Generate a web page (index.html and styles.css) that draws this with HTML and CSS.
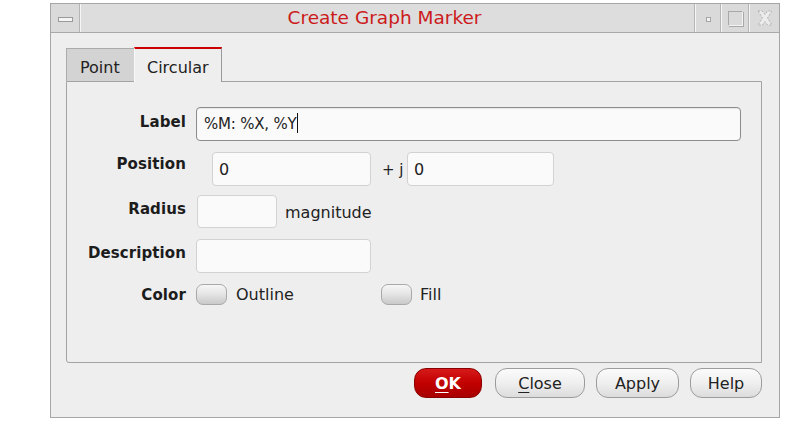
FILE: index.html
```html
<!DOCTYPE html>
<html>
<head>
<meta charset="utf-8">
<link rel="stylesheet" href="styles.css">
</head>
<body>
<div class="window">
  <div class="titlebar">
    <div class="tb-btn tb-menu"><span class="bar-icon"></span></div>
    <div class="title">Create Graph Marker</div>
    <div class="tb-btn tb-min"><span class="dot-icon"></span></div>
    <div class="tb-btn tb-max"><span class="sq-icon"></span></div>
    <div class="tb-btn tb-close">
      <svg width="20" height="20" viewBox="0 0 20 20">
        <path d="M3 3 L7.5 3 L10 6.5 L12.5 3 L17 3 L12.5 10 L17 17 L12.5 17 L10 13.5 L7.5 17 L3 17 L7.5 10 Z" fill="#ececec" stroke="#b0b0b0" stroke-width="1" stroke-dasharray="2 1.5"/>
      </svg>
    </div>
  </div>
  <div class="content">
    <div class="tabs">
      <div class="tab tab-point">Point</div>
      <div class="tab tab-active">Circular</div>
    </div>
    <div class="panel">
      <div class="row row-label">
        <div class="lbl">Label</div>
        <div class="field field-focus field-label">%M: %X, %Y<span class="caret"></span></div>
      </div>
      <div class="row row-pos">
        <div class="lbl">Position</div>
        <div class="field field-pos1">0</div>
        <div class="txt plusj">+ j</div>
        <div class="field field-pos2">0</div>
      </div>
      <div class="row row-rad">
        <div class="lbl">Radius</div>
        <div class="field field-rad"></div>
        <div class="txt mag">magnitude</div>
      </div>
      <div class="row row-desc">
        <div class="lbl">Description</div>
        <div class="field field-desc"></div>
      </div>
      <div class="row row-color">
        <div class="lbl">Color</div>
        <div class="swatch"></div>
        <div class="txt outline">Outline</div>
        <div class="swatch swatch-fill"></div>
        <div class="txt">Fill</div>
      </div>
    </div>
    <div class="footer">
      <div class="btn btn-ok"><u>O</u>K</div>
      <div class="btn btn-close"><u>C</u>lose</div>
      <div class="btn btn-apply">Apply</div>
      <div class="btn btn-help">Help</div>
    </div>
  </div>
</div>
</body>
</html>
```

FILE: styles.css
```css
* { box-sizing: border-box; }
html, body { margin: 0; padding: 0; background: #ffffff; }
body {
  font-family: "DejaVu Sans", "Liberation Sans", sans-serif;
  font-size: 16px;
  color: #222;
  width: 794px;
  height: 422px;
  overflow: hidden;
}
.window {
  margin: 3px 0 0 50px;
  width: 730px;
  height: 415px;
  border: 1px solid #a6a6a6;
  background: #eeeeee;
}
.titlebar {
  height: 29px;
  display: flex;
  background: #dddddd;
  border-bottom: 1px solid #a9a9a9;
}
.tb-btn {
  height: 28px;
  background: #dadada;
  border-right: 1px solid #f6f6f6;
  display: flex;
  align-items: center;
  justify-content: center;
}
.tb-menu { width: 29px; border-right: 1px solid #b5b5b5; }
.bar-icon {
  width: 15px; height: 5px;
  border: 1px solid #9a9a9a;
  background: #f4f4f4;
  margin-top: 3px;
}
.title {
  flex: 1;
  text-align: center;
  color: #cc1a1a;
  font-size: 18.5px;
  line-height: 28px;
  padding-right: 6px;
  border-left: 1px solid #f6f6f6;
  border-right: 1px solid #b5b5b5;
}
.tb-min { width: 26px; border-left: 1px solid #f6f6f6; border-right: 1px solid #b5b5b5; }
.dot-icon {
  width: 5px; height: 5px;
  border: 1px solid #a5a5a5;
  background: #f2f2f2;
  margin-top: 2px;
}
.tb-max { width: 28px; border-left: 1px solid #f6f6f6; border-right: 1px solid #b5b5b5; }
.sq-icon {
  width: 15px; height: 15px;
  border: 1px solid #a8a8a8;
  border-right-color: #f4f4f4;
  border-bottom-color: #f4f4f4;
  background: #dadada;
  box-shadow: 1px 1px 0 #a8a8a8;
}
.tb-close { flex: 0 0 30px; border-left: 1px solid #f6f6f6; border-right: none; }

.content {
  padding: 14px 17px 0 15px;
}
.tabs {
  display: flex;
  align-items: flex-end;
  height: 34px;
}
.tab {
  font-size: 16px;
}
.tab-point {
  width: 68px;
  height: 33px;
  padding-left: 13px;
  background: #d3d3d3;
  border: 1px solid #ababab;
  border-bottom: none;
  border-right: none;
  line-height: 38px;
}
.tab-active {
  position: relative;
  z-index: 1;
  width: 88px;
  height: 35px;
  margin-bottom: -1px;
  padding-left: 12px;
  background: #eeeeee;
  border-top: 2px solid #cc0000;
  border-left: 1px solid #f8f8f8;
  border-right: 1px solid #999999;
  line-height: 38px;
}
.panel {
  width: 696px;
  height: 282px;
  border: 1px solid #a3a3a3;
  border-radius: 0 0 0 3px;
  padding-top: 25px;
  display: flex;
  flex-direction: column;
}
.row {
  display: flex;
  align-items: flex-start;
}
.lbl {
  width: 119px;
  text-align: right;
  font-weight: bold;
  font-size: 15px;
  letter-spacing: 0.1px;
  color: #1c1c1c;
}
.field {
  height: 34px;
  border: 1px solid #d2d2d2;
  border-radius: 4px;
  background: #fafafa;
  padding-left: 6px;
  font-size: 16px;
  line-height: 33px;
  color: #222;
}
.field-focus {
  border-color: #8c8c8c;
  box-shadow: inset 0 1px 1px rgba(0,0,0,0.08);
}
.caret {
  display: inline-block;
  width: 1px;
  height: 20px;
  background: #111;
  vertical-align: -4px;
}
.row-label { height: 34px; }
.row-label .lbl { padding-top: 6px; }
.field-label { margin-left: 10px; width: 545px; font-size: 15px; padding-left: 7px; letter-spacing: -0.2px; }

.row-pos { margin-top: 11px; height: 34px; }
.row-pos .lbl { padding-top: 3px; }
.field-pos1 { margin-left: 26px; width: 159px; }
.txt { font-size: 16px; line-height: 34px; color: #222; }
.plusj { margin-left: 11px; width: 25px; font-size: 15px; line-height: 36px; }
.field-pos2 { width: 147px; }

.row-rad { margin-top: 9px; height: 33px; }
.row-rad .lbl { padding-top: 5px; }
.field-rad { margin-left: 11px; width: 80px; height: 33px; }
.mag { margin-left: 8px; line-height: 36px; }

.row-desc { margin-top: 11px; height: 34px; }
.row-desc .lbl { padding-top: 5px; }
.field-desc { margin-left: 10px; width: 175px; }

.row-color { margin-top: 10px; height: 22px; align-items: center; }
.row-color .lbl { margin-top: 2px; }
.row-color .txt { line-height: 22px; margin-top: 2px; }
.swatch {
  margin-left: 10px;
  width: 31px;
  height: 21px;
  border: 1px solid #a9a9a9;
  border-radius: 7px;
  background: linear-gradient(#f6f6f6 0%, #e6e6e6 45%, #c9c9c9 100%);
}
.outline { margin-left: 9px; width: 145px; }
.swatch-fill { margin-left: 0; margin-right: 8px; }

.footer {
  display: flex;
  justify-content: flex-end;
  margin-top: 5px;
  gap: 11px;
}
.btn {
  height: 30px;
  border: 1px solid #9c9c9c;
  border-radius: 12px;
  background: linear-gradient(#fbfbfb 0%, #efefef 50%, #dcdcdc 100%);
  text-align: center;
  font-size: 16px;
  line-height: 29px;
  color: #222;
}
.btn u { text-underline-offset: 3px; }
.btn-ok {
  width: 68px;
  margin-right: 2px;
  background: linear-gradient(#d61a1a 0%, #c20000 50%, #a80000 100%);
  border-color: #8a0000;
  color: #ffffff;
  font-weight: bold;
}
.btn-close { width: 90px; }
.btn-apply { width: 83px; }
.btn-help { width: 72px; }
```
